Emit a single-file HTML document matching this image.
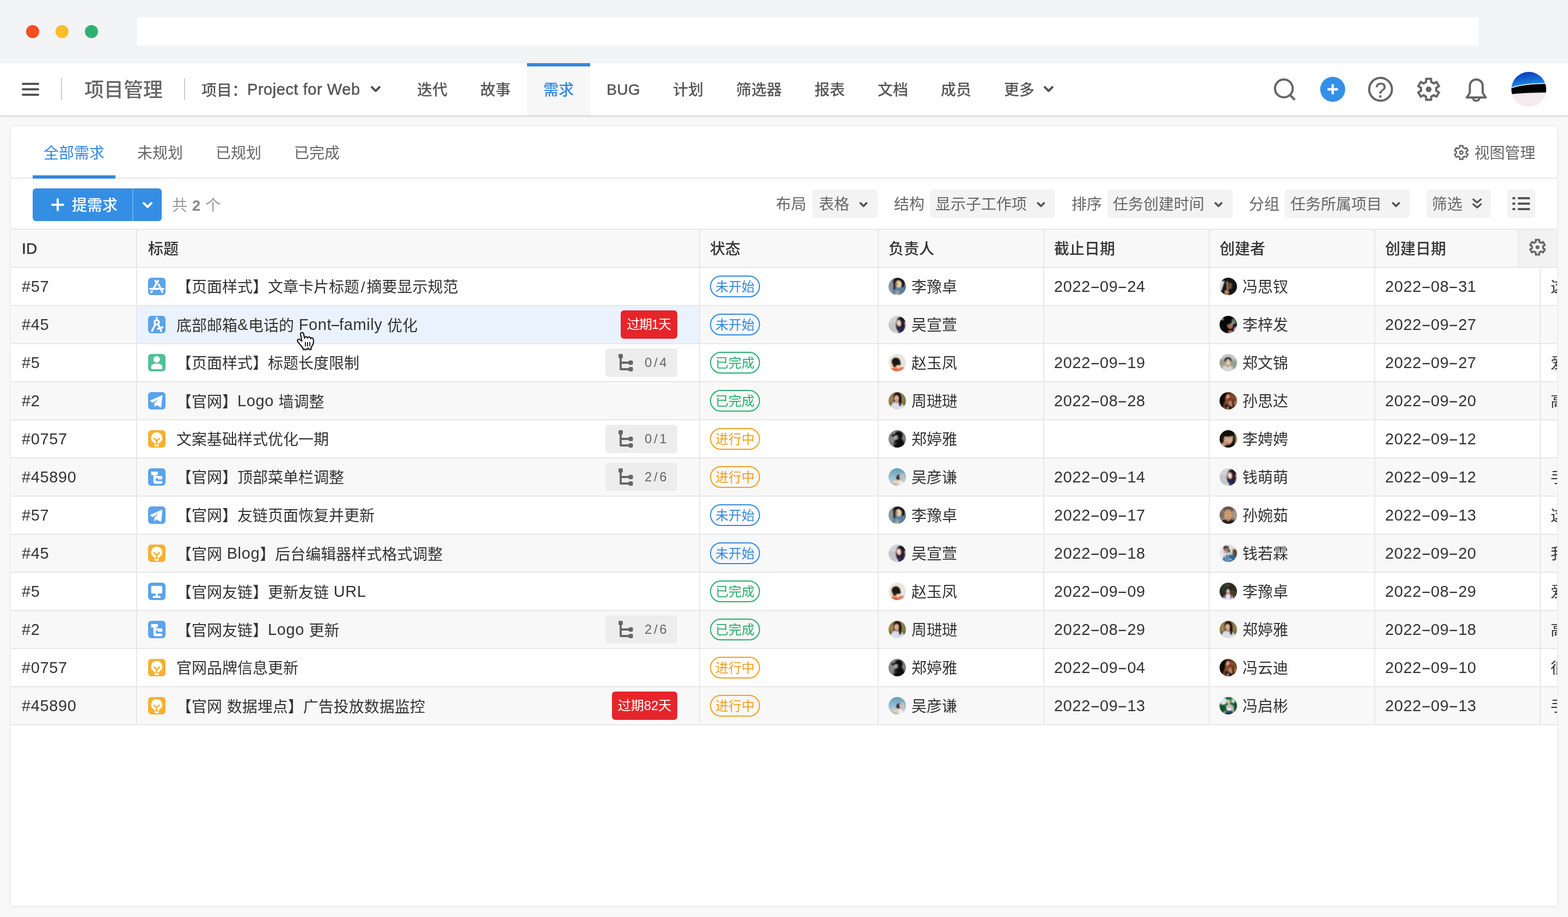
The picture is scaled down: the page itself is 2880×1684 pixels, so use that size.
<!DOCTYPE html>
<html lang="zh-CN">
<head>
<meta charset="utf-8">
<title>项目管理 - 需求</title>
<style>
*{box-sizing:border-box;margin:0;padding:0}
html,body{width:2880px;height:1684px;overflow:hidden}
body{position:relative;background:#f8f8f8;font-family:"Liberation Sans","Noto Sans CJK SC",sans-serif;font-size:28px;color:#333;-webkit-font-smoothing:antialiased}
i{font-style:normal}
svg{display:block}
.abs{position:absolute}
/* browser chrome */
.chrome{will-change:transform;position:absolute;left:0;top:0;width:2880px;height:116px;background:#f3f4f6}
.dot{position:absolute;top:46px;width:24px;height:24px;border-radius:50%}
.url{position:absolute;left:252px;top:32px;width:2464px;height:52px;background:#fff}
/* nav */
.nav{will-change:transform;position:absolute;left:0;top:116px;width:2880px;height:96px;background:#fff;box-shadow:0 1px 3px rgba(0,0,0,.2),0 2px 5px rgba(0,0,0,.05);z-index:5}
.nav .ham{position:absolute;left:40px;top:36px;width:32px;height:24px}
.nav .ham i{position:absolute;left:0;width:32px;height:4px;border-radius:2px;background:#555}
.nav .sep{position:absolute;top:28px;width:2px;height:40px;background:#ccc}
.nav .brand{position:absolute;left:155px;top:0;height:96px;line-height:99px;font-size:36px;font-weight:500;color:#666;white-space:nowrap}
.nav .proj{position:absolute;left:370px;top:0;height:96px;line-height:100px;font-size:28px;color:#555;white-space:nowrap;font-weight:500}
.nav .tab{position:absolute;top:0;height:96px;line-height:100px;font-size:28px;color:#555;text-align:center;white-space:nowrap;font-weight:500}
.nav .tab.on{background:#f7f7f7;color:#3388e0;border-top:6px solid #3388e0;line-height:88px}
.nav .ic{position:absolute}
/* card */
.card{will-change:transform;position:absolute;left:20px;top:232px;width:2840px;height:1432px;background:#fff;border-radius:5px;box-shadow:0 0 5px rgba(0,0,0,.09),0 1px 2px rgba(0,0,0,.06);overflow:hidden}
.vtabs{position:absolute;left:0;top:0;width:2840px;height:96px;border-bottom:2px solid #e8e8e8}
.vtab{position:absolute;top:0;height:96px;line-height:100px;font-size:28px;color:#666;white-space:nowrap}
.vtab.on{color:#3388e0}
.vtab.on:after{content:"";position:absolute;left:-20px;right:-20px;bottom:0;height:6px;background:#3388e0}
.vmgr{position:absolute;top:0;height:96px;line-height:99px;font-size:28px;color:#666;white-space:nowrap}
/* toolbar */
.btnp{position:absolute;left:40px;top:114px;width:237px;height:60px;border-radius:6px;background:#348fe4;color:#fff;font-size:28px;font-weight:500;line-height:64px;white-space:nowrap}
.btnp .sp{position:absolute;left:183px;top:0;width:2px;height:60px;background:rgba(255,255,255,.28)}
.cnt{position:absolute;left:296px;top:114px;height:60px;line-height:64px;letter-spacing:.5px;color:#999;font-size:28px;white-space:nowrap}
.cnt b{font-weight:700;color:#888}
.lab{position:absolute;top:116px;height:52px;line-height:56px;color:#666;font-size:28px;white-space:nowrap}
.sel{position:absolute;top:116px;height:52px;line-height:56px;background:#f3f3f3;border-radius:6px;color:#666;font-size:28px;white-space:nowrap;padding-left:10px}
.sel svg{position:absolute}
/* table */
.table{position:absolute;left:0;top:188px;width:2840px}
.tr{position:relative;height:70px;border-top:2px solid #e8e8e8;background:#fff;white-space:nowrap}
.tr.alt{background:#f8f8f8}
.tr.th{background:#f8f8f8;font-weight:500;color:#333}
.tr.end{height:2px;background:none}
.c{position:absolute;top:0;height:68px;line-height:72px;border-right:2px solid #e8e8e8;overflow:hidden}
.c-id{left:0;width:232px;padding-left:20px}
.c-title{left:232px;width:1034px;padding-left:20px}
.c-st{left:1266px;width:328px;padding-left:18px}
.c-own{left:1594px;width:304px;padding-left:18px}
.c-due{left:1898px;width:304px;padding-left:18px}
.c-cr{left:2202px;width:304px;padding-left:18px}
.c-cd{left:2506px;width:304px;padding-left:18px}
.c-ex{left:2810px;width:304px;padding-left:18px;border-right:0}
.c-gear{position:absolute;left:2768px;top:0;width:72px;height:68px;border-left:2px solid #e8e8e8;background:#f2f2f2}
.tr.hov .c-title{background:#eaf2fd}
.ti{position:absolute;left:20px;top:18px;width:32px;height:32px;border-radius:6px;background:#5ba3ea;overflow:hidden}
.ti-user{background:#4fc197}
.ti-bulb{background:#f4b133}
.tt{position:absolute;left:72px;top:0;height:68px;line-height:72px}
.bd{position:absolute;right:40px;top:8px;height:52px;line-height:52px;border-radius:6px;font-size:24px}
.bd.late{background:#e6252a;color:#fff;font-size:24px;line-height:51px;text-align:center}
.bd.l1{letter-spacing:-1.200px;text-indent:-1px}
.bd.sub{background:#ededed;color:#666;width:132px}
.bd.sub svg{position:absolute;left:23px;top:10px}
.bd.sub b{position:absolute;left:72px;top:0;font-weight:400;letter-spacing:3.6px}
.pill{position:absolute;left:18px;top:14px;width:92px;height:40px;border:2px solid;border-radius:20px;font-size:24px;line-height:37px;text-align:center}
.pill.todo{color:#3388e0;border-color:#3388e0}
.pill.done{color:#27ae6c;border-color:#27ae6c}
.pill.doing{color:#f0a020;border-color:#f0a020}
.av{position:absolute;left:18px;top:18px;width:32px;height:32px;border-radius:50%;overflow:hidden}
.nm{position:absolute;left:60px;top:0}
.num{letter-spacing:.6px;line-height:68px;font-size:29px}
.hy{display:inline-block;width:17px;text-align:center;letter-spacing:0;transform:scaleX(1.9)}
.hy2{display:inline-block;width:14px;text-align:center;letter-spacing:0;transform:scaleX(2)}
.sl{letter-spacing:0;padding:0 2.800px}
.cursor{position:absolute;left:545px;top:609px;z-index:9;filter:drop-shadow(0 1px 1.500px rgba(0,0,0,.35))}
.lt{letter-spacing:.6px;font-size:29px;position:relative;top:-2px}
.proj .lt{letter-spacing:.55px}
.nav .lt{-webkit-text-stroke:.5px #555}
.lb{-webkit-text-stroke:.5px;position:relative;top:-1px;letter-spacing:.3px}
.av svg{position:absolute;left:-4px;top:-4px;filter:blur(1px)}
.av svg.bl2{filter:blur(.8px)}
</style>
</head>
<body>
<div class="chrome">
<div class="dot" style="left:48px;background:#f44e22"></div>
<div class="dot" style="left:102px;background:#fdbc2c"></div>
<div class="dot" style="left:156px;background:#2fb171"></div>
<div class="url"></div>
</div>
<div class="nav">
<div class="ham"><i style="top:0"></i><i style="top:10px"></i><i style="top:20px"></i></div>
<div class="sep" style="left:112px"></div>
<div class="brand">项目管理</div>
<div class="sep" style="left:338px"></div>
<div class="proj">项目：<span class="lt">Project for Web</span></div>
<svg class="ic" style="left:680px;top:41px" width="20" height="14" viewBox="0 0 20 14"><path d="M3 3l7 7 7-7" fill="none" stroke="#555" stroke-width="4" stroke-linecap="round" stroke-linejoin="round"/></svg>
<div class="tab" style="left:736px;width:116px">迭代</div>
<div class="tab" style="left:852px;width:116px">故事</div>
<div class="tab on" style="left:968px;width:116px">需求</div>
<div class="tab" style="left:1084px;width:122px"><span class="lb">BUG</span></div>
<div class="tab" style="left:1206px;width:116px">计划</div>
<div class="tab" style="left:1322px;width:144px">筛选器</div>
<div class="tab" style="left:1466px;width:116px">报表</div>
<div class="tab" style="left:1582px;width:116px">文档</div>
<div class="tab" style="left:1698px;width:116px">成员</div>
<div class="tab" style="left:1814px;width:116px">更多</div>
<svg class="ic" style="left:1916px;top:41px" width="20" height="14" viewBox="0 0 20 14"><path d="M3 3l7 7 7-7" fill="none" stroke="#555" stroke-width="4" stroke-linecap="round" stroke-linejoin="round"/></svg>
<svg class="ic" style="left:2336px;top:24px" width="48" height="48" viewBox="0 0 48 48"><circle cx="22.100" cy="22.400" r="16.300" fill="none" stroke="#666" stroke-width="4"/><path d="M33.200 34.200L42.200 43.200" stroke="#666" stroke-width="4.400"/></svg><svg class="ic" style="left:2424px;top:24px" width="48" height="48" viewBox="0 0 48 48"><circle cx="23.800" cy="24" r="23" fill="#3390e8"/><path d="M14.300 24h19M23.800 14.800v18.400" stroke="#fff" stroke-width="4.400"/></svg><svg class="ic" style="left:2511px;top:24px" width="50" height="48" viewBox="0 0 50 48"><circle cx="24.700" cy="24" r="20.900" fill="none" stroke="#666" stroke-width="4"/><text x="24.800" y="38.700" font-size="38" text-anchor="middle" font-family="Liberation Sans,sans-serif" fill="#666" stroke="#666" stroke-width=".5">?</text></svg><svg class="ic" style="left:2599.500px;top:23.700px" width="48" height="48" viewBox="0 0 48 48"><path d="M28.86 10.66L28.45 4.71L19.55 4.71L19.14 10.66A14.20 14.20 0 0 0 14.87 13.12L9.52 10.50L5.07 18.21L10.02 21.53A14.20 14.20 0 0 0 10.02 26.47L5.07 29.79L9.52 37.50L14.87 34.88A14.20 14.20 0 0 0 19.14 37.34L19.55 43.29L28.45 43.29L28.86 37.34A14.20 14.20 0 0 0 33.13 34.88L38.48 37.50L42.93 29.79L37.98 26.47A14.20 14.20 0 0 0 37.98 21.53L42.93 18.21L38.48 10.50L33.13 13.12A14.20 14.20 0 0 0 28.86 10.66Z" fill="none" stroke="#666" stroke-width="4" stroke-linejoin="miter"/><circle cx="24" cy="24" r="5.300" fill="#666"/></svg><svg class="ic" style="left:2688px;top:24px" width="48" height="52" viewBox="0 0 48 52"><path d="M6 39h35c-2.800-4.200-5.700-7.400-5.700-10V17.500c0-6.500-5-11.500-11.800-11.500S11.700 11 11.700 17.500V29c0 2.600-2.900 5.800-5.700 10z" fill="none" stroke="#666" stroke-width="4" stroke-linejoin="round"/><path d="M17.500 40.500a6.200 6.200 0 0 0 12 0" fill="none" stroke="#666" stroke-width="3.600"/></svg><svg class="ic" style="left:2775.500px;top:15.700px" width="64" height="64" viewBox="0 0 64 64"><defs><clipPath id="avc"><circle cx="32" cy="32" r="32"/></clipPath><linearGradient id="avg" x1="0" y1="0" x2="0.300" y2="1"><stop offset="0" stop-color="#0a2fb4"/><stop offset="0.550" stop-color="#1565d0"/><stop offset="1" stop-color="#2a95ea"/></linearGradient><pattern id="avp" width="5" height="4" patternUnits="userSpaceOnUse"><path d="M0 0h5M0 0v4" stroke="#e9c8d6" stroke-width="0.500" fill="none"/></pattern></defs><g clip-path="url(#avc)"><rect width="64" height="64" fill="#f8eef0"/><rect y="36" width="64" height="28" fill="url(#avp)"/><path d="M0 0h64v22C40 22 16 25 0 30z" fill="url(#avg)"/><path d="M0 29.500C16 24.500 40 21.500 64 21.500v16.500C40 38 16 39 0 41z" fill="#000"/><path d="M0 29C16 24 40 21.200 64 21.200" fill="none" stroke="#fff" stroke-width="1.600"/></g></svg>
</div>
<div class="card">
<div class="vtabs">
<div class="vtab on" style="left:60px">全部需求</div>
<div class="vtab" style="left:232px">未规划</div>
<div class="vtab" style="left:376px">已规划</div>
<div class="vtab" style="left:520px">已完成</div>
<svg class="abs" style="left:2648px;top:32px" width="32" height="32" viewBox="0 0 32 32"><path d="M19.15 7.35L18.86 3.63L13.14 3.63L12.85 7.35A9.20 9.20 0 0 0 10.09 8.95L6.71 7.34L3.85 12.29L6.94 14.40A9.20 9.20 0 0 0 6.94 17.60L3.85 19.71L6.71 24.66L10.09 23.05A9.20 9.20 0 0 0 12.85 24.65L13.14 28.37L18.86 28.37L19.15 24.65A9.20 9.20 0 0 0 21.91 23.05L25.29 24.66L28.15 19.71L25.06 17.60A9.20 9.20 0 0 0 25.06 14.40L28.15 12.29L25.29 7.34L21.91 8.95A9.20 9.20 0 0 0 19.15 7.35Z" fill="none" stroke="#666" stroke-width="2.6" stroke-linejoin="miter"/><circle cx="16" cy="16" r="2.900" fill="none" stroke="#666" stroke-width="2.600"/></svg>
<div class="vmgr" style="left:2688px">视图管理</div>
</div>
<div class="btnp"><svg class="abs" style="left:34px;top:18px" width="24" height="24" viewBox="0 0 24 24"><path d="M12 2v20M2 12h20" stroke="#fff" stroke-width="4" stroke-linecap="round"/></svg><span class="abs" style="left:72px">提需求</span><span class="sp"></span><svg class="abs" style="left:201px;top:24px" width="20" height="14" viewBox="0 0 20 14"><path d="M3 3l7 7 7-7" fill="none" stroke="#fff" stroke-width="4" stroke-linecap="round" stroke-linejoin="round"/></svg></div>
<div class="cnt">共 <b>2</b> 个</div>
<div class="lab" style="left:1405px">布局</div>
<div class="sel" style="left:1472px;width:120px;padding-left:12px">表格<svg style="left:86px;top:22px" width="16" height="12" viewBox="0 0 16 12"><path d="M2.500 3l5.500 5.500L13.500 3" fill="none" stroke="#555" stroke-width="3.800" stroke-linecap="round" stroke-linejoin="round"/></svg></div>
<div class="lab" style="left:1622px">结构</div>
<div class="sel" style="left:1688px;width:230px">显示子工作项<svg style="left:196px;top:22px" width="16" height="12" viewBox="0 0 16 12"><path d="M2.500 3l5.500 5.500L13.500 3" fill="none" stroke="#555" stroke-width="3.800" stroke-linecap="round" stroke-linejoin="round"/></svg></div>
<div class="lab" style="left:1948px">排序</div>
<div class="sel" style="left:2014px;width:230px">任务创建时间<svg style="left:196px;top:22px" width="16" height="12" viewBox="0 0 16 12"><path d="M2.500 3l5.500 5.500L13.500 3" fill="none" stroke="#555" stroke-width="3.800" stroke-linecap="round" stroke-linejoin="round"/></svg></div>
<div class="lab" style="left:2274px">分组</div>
<div class="sel" style="left:2340px;width:230px">任务所属项目<svg style="left:196px;top:22px" width="16" height="12" viewBox="0 0 16 12"><path d="M2.500 3l5.500 5.500L13.500 3" fill="none" stroke="#555" stroke-width="3.800" stroke-linecap="round" stroke-linejoin="round"/></svg></div>
<div class="sel" style="left:2600px;width:118px">筛选<svg style="left:83px;top:15px" width="20" height="22" viewBox="0 0 20 22"><path d="M3 3l7 6 7-6M3 12l7 6 7-6" fill="none" stroke="#555" stroke-width="3.2" stroke-linecap="round" stroke-linejoin="round"/></svg></div>
<div class="sel" style="left:2748px;width:52px;padding:0"><svg style="left:10px;top:13px" width="32" height="26" viewBox="0 0 32 26"><path d="M0 1h5v4H0zM10 1h22v4H10zM0 11h5v4H0zM10 11h22v4H10zM0 21h5v4H0zM10 21h22v4H10z" fill="#555"/></svg></div>
<div class="table">
<div class="tr th"><div class="c c-id"><span class="lb">ID</span></div><div class="c c-title">标题</div><div class="c c-st">状态</div><div class="c c-own">负责人</div><div class="c c-due">截止日期</div><div class="c c-cr">创建者</div><div class="c c-cd">创建日期</div><div class="c-gear"><svg class="abs" style="left:16px;top:14px" width="36" height="36" viewBox="0 0 36 36"><path d="M21.49 8.42L21.15 4.36L14.85 4.36L14.51 8.42A10.20 10.20 0 0 0 11.44 10.19L7.76 8.45L4.61 13.91L7.95 16.23A10.20 10.20 0 0 0 7.95 19.77L4.61 22.09L7.76 27.55L11.44 25.81A10.20 10.20 0 0 0 14.51 27.58L14.85 31.64L21.15 31.64L21.49 27.58A10.20 10.20 0 0 0 24.56 25.81L28.24 27.55L31.39 22.09L28.05 19.77A10.20 10.20 0 0 0 28.05 16.23L31.39 13.91L28.24 8.45L24.56 10.19A10.20 10.20 0 0 0 21.49 8.42Z" fill="none" stroke="#666" stroke-width="3.4" stroke-linejoin="miter"/><circle cx="18" cy="18" r="3.600" fill="#666"/></svg></div></div>
<div class="tr"><div class="c c-id num">#57</div><div class="c c-title"><span class="ti ti-app"><svg width="32" height="32" viewBox="0 0 32 32"><g stroke="#fff" stroke-linecap="round" fill="none" stroke-width="3.500"><path d="M18.300 5.700L10 19.800M13.300 5.700L15 8.600M19.300 12.400L26.300 26.400M3.800 20.400H19.500M24.200 20.400H28.200M5.600 26.400L7.400 25.300"/></g></svg></span><span class="tt">【页面样式】文章卡片标题<i class="sl">/</i>摘要显示规范</span></div><div class="c c-st"><span class="pill todo">未开始</span></div><div class="c c-own"><span class="av"><svg class="bl" width="40" height="40" viewBox="-4 -4 40 40"><rect x="-4" y="-4" width="40" height="40" fill="#879899"/><rect x="25" y="-4" width="11" height="40" fill="#a9c7c3"/><path d="M8 18L34 13V36H9z" fill="#5f7e9e"/><path d="M13 22l8 3-3 9h-6z" fill="#7f9fb8"/><ellipse cx="19" cy="7" rx="11" ry="7.5" fill="#1b1020"/><rect x="9" y="4" width="3.5" height="17" fill="#2a1a28"/><ellipse cx="26" cy="11" rx="4" ry="6.5" fill="#22121e"/><ellipse cx="18.5" cy="11.5" rx="5.8" ry="6.8" fill="#e6d29e" transform="rotate(-15 18.5 11.5)"/><ellipse cx="14.5" cy="12" rx="2" ry="4" fill="#a8826a"/><ellipse cx="15" cy="31" rx="4" ry="2" fill="#e2c07e"/></svg></span><span class="nm">李豫卓</span></div><div class="c c-due num">2022<i class="hy">-</i>09<i class="hy">-</i>24</div><div class="c c-cr"><span class="av"><svg class="bl" width="40" height="40" viewBox="-4 -4 40 40"><rect x="-4" y="-4" width="40" height="40" fill="#161412"/><path d="M-2 6h11.500L3.500 24H-2z" fill="#dfe4e2"/><path d="M12.500 6l3.500 2-1 8 2 5-3 3-1-6z" fill="#b89880"/><ellipse cx="19.5" cy="15" rx="3.5" ry="6" fill="#7a5238"/><path d="M8 32l2-8 5-1 3 3-2 8z" fill="#a87848"/><ellipse cx="12" cy="25" rx="2.5" ry="2" fill="#d8b090"/></svg></span><span class="nm">冯思钗</span></div><div class="c c-cd num">2022<i class="hy">-</i>08<i class="hy">-</i>31</div><div class="c c-ex">这是迭代</div></div>
<div class="tr alt hov"><div class="c c-id num">#45</div><div class="c c-title"><span class="ti ti-comp"><svg width="32" height="32" viewBox="0 0 32 32"><g stroke="#fff" stroke-linecap="round" fill="none" stroke-width="3.500"><circle cx="15.800" cy="11.900" r="4"/><path d="M15.800 3.200V7M13 15.800L7.200 28M18.700 15.800L24.200 28M17.800 23.800L26.500 21"/></g></svg></span><span class="tt">底部邮箱<span class="lt">&amp;</span>电话的<span class="lt"> Font<i class="hy2">-</i>family </span>优化</span><span class="bd late l1" style="width:104px">过期1天</span></div><div class="c c-st"><span class="pill todo">未开始</span></div><div class="c c-own"><span class="av"><svg class="bl" width="40" height="40" viewBox="-4 -4 40 40"><rect x="-4" y="-4" width="40" height="40" fill="#c3c6cb"/><rect x="-4" y="-4" width="40" height="15" fill="#cfd3dd"/><rect x="-4" y="10" width="22" height="2" fill="#e0d2cc"/><path d="M12 28h10v8H10z" fill="#d9d2cc"/><ellipse cx="27" cy="6" rx="6" ry="6" fill="#1c2a22"/><ellipse cx="22" cy="16" rx="8.5" ry="14" fill="#2a1a1e"/><path d="M19 22l9-1 4 12H18z" fill="#1f2f80"/><ellipse cx="19" cy="13.5" rx="4.3" ry="6.2" fill="#ead3cb" transform="rotate(-8 19 13.5)"/><ellipse cx="18" cy="17.2" rx="1.3" ry="0.7" fill="#d86a6a"/><rect x="23" y="14" width="3" height="18" fill="#3a1c1c"/><ellipse cx="31" cy="14" rx="2" ry="3" fill="#c8c0d0"/></svg></span><span class="nm">吴宣萱</span></div><div class="c c-due num"></div><div class="c c-cr"><span class="av"><svg class="bl" width="40" height="40" viewBox="-4 -4 40 40"><rect x="-4" y="-4" width="40" height="40" fill="#060606"/><ellipse cx="27" cy="10" rx="5" ry="6" fill="#4a6a5c"/><ellipse cx="24.5" cy="12" rx="3" ry="2.5" fill="#8aa098"/><ellipse cx="5" cy="6" rx="3" ry="2" fill="#a890c0"/><path d="M25 24l6-6 3 4-6 10z" fill="#b898d4"/><ellipse cx="19.5" cy="17" rx="5.5" ry="7" fill="#b47c62"/><ellipse cx="17" cy="12" rx="6" ry="3.5" fill="#0a0a0a" transform="rotate(-25 17 12)"/><ellipse cx="19" cy="19.5" rx="2" ry="1" fill="#6a3c30"/><ellipse cx="20" cy="30" rx="5" ry="3.5" fill="#b87458"/></svg></span><span class="nm">李梓发</span></div><div class="c c-cd num">2022<i class="hy">-</i>09<i class="hy">-</i>27</div><div class="c c-ex"></div></div>
<div class="tr"><div class="c c-id num">#5</div><div class="c c-title"><span class="ti ti-user"><svg width="32" height="32" viewBox="0 0 32 32"><circle cx="15.800" cy="10" r="6.100" fill="#fff"/><path d="M5.700 26.500v-3.300c0-3.400 4.400-5.400 10.100-5.400s10.300 2 10.300 5.400v3.300a1.500 1.500 0 0 1-1.500 1.500H7.200a1.500 1.500 0 0 1-1.500-1.500z" fill="#fff"/></svg></span><span class="tt">【页面样式】标题长度限制</span><span class="bd sub"><svg width="28" height="32" viewBox="0 0 28 32"><path d="M5 4v24h16M5 16h16" fill="none" stroke="#666" stroke-width="3.800" stroke-linejoin="round"/><rect x="1" y="0" width="8" height="8" rx="2" fill="#666"/><rect x="19.500" y="12" width="8" height="8" rx="2" fill="#666"/><rect x="19.500" y="24" width="8" height="8" rx="2" fill="#666"/></svg><b>0/4</b></span></div><div class="c c-st"><span class="pill done">已完成</span></div><div class="c c-own"><span class="av"><svg class="bl2" width="40" height="40" viewBox="-4 -4 40 40"><rect x="-4" y="-4" width="40" height="40" fill="#ebe7dd"/><path d="M4 27c5-2 9-1 12-1 5-1 8-2 12-1l4 2v10H0z" fill="#e0643c"/><path d="M16 26c5-1 8-2 12-1l4 2v10H18z" fill="#e87a5e"/><rect x="12.5" y="21" width="3.5" height="6" fill="#d8903c"/><rect x="15" y="22" width="4" height="4.5" fill="#f0e0d0"/><ellipse cx="7.8" cy="20" rx="2" ry="4" fill="#dba25e"/><ellipse cx="13.5" cy="14" rx="8" ry="7.2" fill="#1a1714"/><ellipse cx="19" cy="17.5" rx="3.5" ry="3.2" fill="#1a1714"/><rect x="9" y="18" width="4" height="6" fill="#1a1714"/></svg></span><span class="nm">赵玉凤</span></div><div class="c c-due num">2022<i class="hy">-</i>09<i class="hy">-</i>19</div><div class="c c-cr"><span class="av"><svg class="bl" width="40" height="40" viewBox="-4 -4 40 40"><rect x="-4" y="-4" width="40" height="40" fill="#a9aba1"/><rect x="-4" y="-4" width="40" height="14" fill="#c6c9c3"/><rect x="20" y="14" width="16" height="22" fill="#92a097"/><rect x="-4" y="10" width="14" height="10" fill="#9a9c8e"/><path d="M3 36c0-8 3-13 8-15l4 3 5-2c5 2 7 7 8 14z" fill="#d9d7d5"/><ellipse cx="15.5" cy="11" rx="6.5" ry="5" fill="#1a2030"/><ellipse cx="16" cy="15" rx="4.2" ry="6" fill="#e2c2a2" transform="rotate(-10 16 15)"/><ellipse cx="15.5" cy="18" rx="1.5" ry="1" fill="#f0e8e0"/><rect x="13" y="20" width="4" height="4" fill="#c89870"/></svg></span><span class="nm">郑文锦</span></div><div class="c c-cd num">2022<i class="hy">-</i>09<i class="hy">-</i>27</div><div class="c c-ex">爱好者</div></div>
<div class="tr alt"><div class="c c-id num">#2</div><div class="c c-title"><span class="ti ti-send"><svg width="32" height="32" viewBox="0 0 32 32"><path d="M3.600 16L26.100 6 23.700 28.300 15.600 23.700 12.200 26.900 11.700 20.700 20.700 11.200 8.400 19.300z" fill="#fff" stroke="#fff" stroke-width=".6" stroke-linejoin="round"/></svg></span><span class="tt">【官网】<span class="lt">Logo </span>墙调整</span></div><div class="c c-st"><span class="pill done">已完成</span></div><div class="c c-own"><span class="av"><svg class="bl" width="40" height="40" viewBox="-4 -4 40 40"><rect x="-4" y="-4" width="40" height="40" fill="#9a8452"/><rect x="18" y="-4" width="18" height="30" fill="#8a7c4e"/><rect x="-4" y="19" width="40" height="8" fill="#6a7432"/><ellipse cx="16" cy="8" rx="7" ry="7.5" fill="#1e140e"/><rect x="19" y="8" width="4.5" height="18" fill="#120c0a"/><rect x="9.5" y="9" width="2.5" height="9" fill="#2a1a10"/><ellipse cx="14.8" cy="11.5" rx="4.4" ry="6" fill="#e2b4a0"/><ellipse cx="14.5" cy="14" rx="1.4" ry="0.8" fill="#c8402a"/><path d="M2 36c0-10 5-17 10-18l3 2 5-1c6 1 10 6 10 17z" fill="#dcdcea"/><rect x="19.5" y="17" width="3.5" height="8" fill="#120c0a"/></svg></span><span class="nm">周琎琎</span></div><div class="c c-due num">2022<i class="hy">-</i>08<i class="hy">-</i>28</div><div class="c c-cr"><span class="av"><svg class="bl" width="40" height="40" viewBox="-4 -4 40 40"><rect x="-4" y="-4" width="40" height="40" fill="#7c4c2a"/><rect x="-4" y="-4" width="14" height="34" fill="#0c0604"/><path d="M6 34c0-10 3-16 6-20l4 4-2 16z" fill="#8a5030"/><ellipse cx="14" cy="5" rx="6" ry="4" fill="#1a0c08"/><ellipse cx="15.5" cy="8.5" rx="3.6" ry="5" fill="#d49c84"/><ellipse cx="18" cy="12.5" rx="2.2" ry="2.6" fill="#a01224"/><path d="M17 16l5 1 1 10-5 2z" fill="#c48c7c"/><path d="M10 22l6 2 6 3v9H10z" fill="#0a0a08"/><path d="M11.500 24.500l6 1-1 2z" fill="#3c6c32"/><ellipse cx="15" cy="29.5" rx="3" ry="2.5" fill="#b88070"/><rect x="23" y="14" width="5" height="18" fill="#5a3018"/><rect x="27" y="16" width="4" height="8" fill="#a87060"/></svg></span><span class="nm">孙思达</span></div><div class="c c-cd num">2022<i class="hy">-</i>09<i class="hy">-</i>20</div><div class="c c-ex">高优先</div></div>
<div class="tr"><div class="c c-id num">#0757</div><div class="c c-title"><span class="ti ti-bulb"><svg width="32" height="32" viewBox="0 0 32 32"><path d="M15.800 4.100a10.100 10.100 0 0 0-5.600 18.500c.9.700 1.400 1.400 1.500 2.100h8.300c.1-.7.600-1.400 1.500-2.100A10.100 10.100 0 0 0 15.800 4.100z" fill="#fff"/><path d="M11 15.300l4.800 4.400 4.800-4.400M15.800 19.700v5.200" fill="none" stroke="#f4b133" stroke-width="2.900" stroke-linecap="round"/><path d="M11.700 26.400h8.300a4.150 3.700 0 0 1-8.300 0z" fill="#fff"/></svg></span><span class="tt">文案基础样式优化一期</span><span class="bd sub"><svg width="28" height="32" viewBox="0 0 28 32"><path d="M5 4v24h16M5 16h16" fill="none" stroke="#666" stroke-width="3.800" stroke-linejoin="round"/><rect x="1" y="0" width="8" height="8" rx="2" fill="#666"/><rect x="19.500" y="12" width="8" height="8" rx="2" fill="#666"/><rect x="19.500" y="24" width="8" height="8" rx="2" fill="#666"/></svg><b>0/1</b></span></div><div class="c c-st"><span class="pill doing">进行中</span></div><div class="c c-own"><span class="av"><svg class="bl" width="40" height="40" viewBox="-4 -4 40 40"><rect x="-4" y="-4" width="40" height="40" fill="#808080"/><ellipse cx="10" cy="14" rx="9" ry="10" fill="#8c8c8c"/><path d="M10 36V22l4-6h10c3 2 5 6 5 10v10z" fill="#0e0e0e"/><path d="M11 10c0-5 4-8 8-8s7 3 7 8l-3 8h-6v-6z" fill="#0d0d0d"/><path d="M5 8.500l9-1.500v4l-8 .5z" fill="#0d0d0d"/><ellipse cx="14" cy="13.5" rx="3.8" ry="4.2" fill="#a8a8a8"/><ellipse cx="17" cy="14.5" rx="1.5" ry="2.5" fill="#5a5a5a"/><ellipse cx="13" cy="24" rx="1" ry="2" fill="#8a8a8a"/></svg></span><span class="nm">郑婷雅</span></div><div class="c c-due num"></div><div class="c c-cr"><span class="av"><svg class="bl" width="40" height="40" viewBox="-4 -4 40 40"><rect x="-4" y="-4" width="40" height="40" fill="#0e0c08"/><path d="M25 2c4 6 5 18 1 28l8 2V0z" fill="#7c8c52"/><ellipse cx="16" cy="17" rx="8.5" ry="10" fill="#d8aa92" transform="rotate(18 16 17)"/><ellipse cx="15" cy="6" rx="12" ry="6" fill="#100c08"/><ellipse cx="4" cy="16" rx="3.5" ry="8" fill="#1a140c"/><ellipse cx="8" cy="26" rx="5.5" ry="4" fill="#c49478" transform="rotate(-20 8 26)"/><ellipse cx="14.5" cy="23.3" rx="2.2" ry="1" fill="#b23232" transform="rotate(15 14.5 23.3)"/><ellipse cx="17.5" cy="14.5" rx="1.4" ry="0.6" fill="#3a3030"/><ellipse cx="10.5" cy="16.5" rx="1.3" ry="0.6" fill="#3a3030"/><path d="M8 30l8-2 8 1 2 7H8z" fill="#0a0a08"/><ellipse cx="24" cy="13" rx="1.5" ry="3" fill="#a87858"/></svg></span><span class="nm">李娉娉</span></div><div class="c c-cd num">2022<i class="hy">-</i>09<i class="hy">-</i>12</div><div class="c c-ex"></div></div>
<div class="tr alt"><div class="c c-id num">#45890</div><div class="c c-title"><span class="ti ti-tree"><svg width="32" height="32" viewBox="0 0 32 32"><path d="M5.700 6h12.200v6.200h-3.800v1.800h12v6.200h-8v-2.100h-4v5.500h12v4.700H13.800a4 4 0 0 1-4-4V12.200H5.700z" fill="#fff"/></svg></span><span class="tt">【官网】顶部菜单栏调整</span><span class="bd sub"><svg width="28" height="32" viewBox="0 0 28 32"><path d="M5 4v24h16M5 16h16" fill="none" stroke="#666" stroke-width="3.800" stroke-linejoin="round"/><rect x="1" y="0" width="8" height="8" rx="2" fill="#666"/><rect x="19.500" y="12" width="8" height="8" rx="2" fill="#666"/><rect x="19.500" y="24" width="8" height="8" rx="2" fill="#666"/></svg><b>2/6</b></span></div><div class="c c-st"><span class="pill doing">进行中</span></div><div class="c c-own"><span class="av"><svg class="bl" width="40" height="40" viewBox="-4 -4 40 40"><defs><linearGradient id="sky" x1="0" y1="0" x2="0" y2="1"><stop offset="0" stop-color="#5596b5"/><stop offset=".8" stop-color="#bcd6e2"/></linearGradient></defs><rect x="-4" y="-4" width="40" height="40" fill="url(#sky)"/><path d="M3 26l10 2 8 8H0z" fill="#bfb39b"/><path d="M7 25c5-3 10-5 14-5l4 4-3 5-12-1z" fill="#ecd0bc"/><path d="M19 23l8 1-1 10h-7z" fill="#f2ece8"/><ellipse cx="18" cy="16.5" rx="3.5" ry="4.8" fill="#2a2028" transform="rotate(15 18 16.5)"/><ellipse cx="21.5" cy="15.5" rx="2.2" ry="2.8" fill="#e8c4ae"/><path d="M24 21c2-3 3-7 1.500-10l2.500-.5c2.500 3 2 8-1 12z" fill="#e6c0a6"/><ellipse cx="24" cy="11" rx="2" ry="1.3" fill="#e8b8a0"/></svg></span><span class="nm">吴彦谦</span></div><div class="c c-due num">2022<i class="hy">-</i>09<i class="hy">-</i>14</div><div class="c c-cr"><span class="av"><svg class="bl" width="40" height="40" viewBox="-4 -4 40 40"><rect x="-4" y="-4" width="40" height="40" fill="#c3c6cb"/><rect x="-4" y="-4" width="40" height="15" fill="#cfd3dd"/><rect x="-4" y="10" width="22" height="2" fill="#e0d2cc"/><path d="M12 28h10v8H10z" fill="#d9d2cc"/><ellipse cx="27" cy="6" rx="6" ry="6" fill="#1c2a22"/><ellipse cx="22" cy="16" rx="8.5" ry="14" fill="#2a1a1e"/><path d="M19 22l9-1 4 12H18z" fill="#1f2f80"/><ellipse cx="19" cy="13.5" rx="4.3" ry="6.2" fill="#ead3cb" transform="rotate(-8 19 13.5)"/><ellipse cx="18" cy="17.2" rx="1.3" ry="0.7" fill="#d86a6a"/><rect x="23" y="14" width="3" height="18" fill="#3a1c1c"/><ellipse cx="31" cy="14" rx="2" ry="3" fill="#c8c0d0"/></svg></span><span class="nm">钱萌萌</span></div><div class="c c-cd num">2022<i class="hy">-</i>09<i class="hy">-</i>12</div><div class="c c-ex">手机端</div></div>
<div class="tr"><div class="c c-id num">#57</div><div class="c c-title"><span class="ti ti-send"><svg width="32" height="32" viewBox="0 0 32 32"><path d="M3.600 16L26.100 6 23.700 28.300 15.600 23.700 12.200 26.900 11.700 20.700 20.700 11.200 8.400 19.300z" fill="#fff" stroke="#fff" stroke-width=".6" stroke-linejoin="round"/></svg></span><span class="tt">【官网】友链页面恢复并更新</span></div><div class="c c-st"><span class="pill todo">未开始</span></div><div class="c c-own"><span class="av"><svg class="bl" width="40" height="40" viewBox="-4 -4 40 40"><rect x="-4" y="-4" width="40" height="40" fill="#879899"/><rect x="25" y="-4" width="11" height="40" fill="#a9c7c3"/><path d="M8 18L34 13V36H9z" fill="#5f7e9e"/><path d="M13 22l8 3-3 9h-6z" fill="#7f9fb8"/><ellipse cx="19" cy="7" rx="11" ry="7.5" fill="#1b1020"/><rect x="9" y="4" width="3.5" height="17" fill="#2a1a28"/><ellipse cx="26" cy="11" rx="4" ry="6.5" fill="#22121e"/><ellipse cx="18.5" cy="11.5" rx="5.8" ry="6.8" fill="#e6d29e" transform="rotate(-15 18.5 11.5)"/><ellipse cx="14.5" cy="12" rx="2" ry="4" fill="#a8826a"/><ellipse cx="15" cy="31" rx="4" ry="2" fill="#e2c07e"/></svg></span><span class="nm">李豫卓</span></div><div class="c c-due num">2022<i class="hy">-</i>09<i class="hy">-</i>17</div><div class="c c-cr"><span class="av"><svg class="bl" width="40" height="40" viewBox="-4 -4 40 40"><rect x="-4" y="-4" width="40" height="40" fill="#8c7c72"/><rect x="24" y="8" width="8" height="14" fill="#a8988c"/><rect x="0" y="10" width="8" height="10" fill="#7a6e66"/><ellipse cx="16" cy="6" rx="8.5" ry="6" fill="#5a504c"/><ellipse cx="15.8" cy="15" rx="7" ry="9.5" fill="#dca474"/><ellipse cx="15.8" cy="8" rx="6" ry="2.5" fill="#c89068"/><ellipse cx="12.8" cy="13.5" rx="1.5" ry="0.7" fill="#5a4030"/><ellipse cx="18.8" cy="13.5" rx="1.5" ry="0.7" fill="#5a4030"/><ellipse cx="15.8" cy="19" rx="2" ry="0.8" fill="#8a5438"/><ellipse cx="15.8" cy="22" rx="2.5" ry="0.8" fill="#b87858"/><path d="M2 36c0-7 3-11 8-12l6 4 6-4c5 1 8 5 8 12z" fill="#2a1814"/><ellipse cx="9" cy="22.5" rx="1.5" ry="1" fill="#e0d8e0"/></svg></span><span class="nm">孙婉茹</span></div><div class="c c-cd num">2022<i class="hy">-</i>09<i class="hy">-</i>13</div><div class="c c-ex">这是迭代</div></div>
<div class="tr alt"><div class="c c-id num">#45</div><div class="c c-title"><span class="ti ti-bulb"><svg width="32" height="32" viewBox="0 0 32 32"><path d="M15.800 4.100a10.100 10.100 0 0 0-5.600 18.500c.9.700 1.400 1.400 1.500 2.100h8.300c.1-.7.600-1.400 1.500-2.100A10.100 10.100 0 0 0 15.800 4.100z" fill="#fff"/><path d="M11 15.300l4.800 4.400 4.800-4.400M15.800 19.700v5.200" fill="none" stroke="#f4b133" stroke-width="2.900" stroke-linecap="round"/><path d="M11.700 26.400h8.300a4.150 3.700 0 0 1-8.300 0z" fill="#fff"/></svg></span><span class="tt">【官网<span class="lt"> Blog</span>】后台编辑器样式格式调整</span></div><div class="c c-st"><span class="pill todo">未开始</span></div><div class="c c-own"><span class="av"><svg class="bl" width="40" height="40" viewBox="-4 -4 40 40"><rect x="-4" y="-4" width="40" height="40" fill="#c3c6cb"/><rect x="-4" y="-4" width="40" height="15" fill="#cfd3dd"/><rect x="-4" y="10" width="22" height="2" fill="#e0d2cc"/><path d="M12 28h10v8H10z" fill="#d9d2cc"/><ellipse cx="27" cy="6" rx="6" ry="6" fill="#1c2a22"/><ellipse cx="22" cy="16" rx="8.5" ry="14" fill="#2a1a1e"/><path d="M19 22l9-1 4 12H18z" fill="#1f2f80"/><ellipse cx="19" cy="13.5" rx="4.3" ry="6.2" fill="#ead3cb" transform="rotate(-8 19 13.5)"/><ellipse cx="18" cy="17.2" rx="1.3" ry="0.7" fill="#d86a6a"/><rect x="23" y="14" width="3" height="18" fill="#3a1c1c"/><ellipse cx="31" cy="14" rx="2" ry="3" fill="#c8c0d0"/></svg></span><span class="nm">吴宣萱</span></div><div class="c c-due num">2022<i class="hy">-</i>09<i class="hy">-</i>18</div><div class="c c-cr"><span class="av"><svg class="bl" width="40" height="40" viewBox="-4 -4 40 40"><rect x="-4" y="-4" width="40" height="40" fill="#dedede"/><rect x="-4" y="-4" width="10" height="40" fill="#e8e8e8"/><rect x="24" y="8" width="12" height="16" fill="#5c4c44"/><rect x="24" y="8" width="8" height="2" fill="#a87850"/><rect x="19" y="14" width="5" height="8" fill="#c8c8c8"/><path d="M5 36c0-9 3-15 7-17h9c5 1 9 5 11 10v7z" fill="#286a9a"/><path d="M10 18l6-1 1 19h-6z" fill="#d2e2f2"/><rect x="12.5" y="19" width="2" height="17" fill="#1a1a20"/><ellipse cx="12" cy="6.5" rx="5" ry="4" fill="#121214"/><ellipse cx="12.5" cy="11" rx="4.2" ry="5.5" fill="#ca9a82"/><rect x="8.5" y="8.5" width="8" height="2" fill="#5a4848"/><ellipse cx="17.5" cy="12" rx="1.5" ry="3" fill="#2a2024"/><rect x="18.5" y="26" width="3.5" height="2.5" fill="#e8eef4"/></svg></span><span class="nm">钱若霖</span></div><div class="c c-cd num">2022<i class="hy">-</i>09<i class="hy">-</i>20</div><div class="c c-ex">我的项目</div></div>
<div class="tr"><div class="c c-id num">#5</div><div class="c c-title"><span class="ti ti-desk"><svg width="32" height="32" viewBox="0 0 32 32"><rect x="5.700" y="5.900" width="20.400" height="14.100" rx="2.200" fill="#fff"/><path d="M13.800 19.500h4.100v4.700h4l1.400 3.800H8.300l1.400-3.800h4.100z" fill="#fff"/></svg></span><span class="tt">【官网友链】更新友链<span class="lt"> URL</span></span></div><div class="c c-st"><span class="pill done">已完成</span></div><div class="c c-own"><span class="av"><svg class="bl2" width="40" height="40" viewBox="-4 -4 40 40"><rect x="-4" y="-4" width="40" height="40" fill="#ebe7dd"/><path d="M4 27c5-2 9-1 12-1 5-1 8-2 12-1l4 2v10H0z" fill="#e0643c"/><path d="M16 26c5-1 8-2 12-1l4 2v10H18z" fill="#e87a5e"/><rect x="12.5" y="21" width="3.5" height="6" fill="#d8903c"/><rect x="15" y="22" width="4" height="4.5" fill="#f0e0d0"/><ellipse cx="7.8" cy="20" rx="2" ry="4" fill="#dba25e"/><ellipse cx="13.5" cy="14" rx="8" ry="7.2" fill="#1a1714"/><ellipse cx="19" cy="17.5" rx="3.5" ry="3.2" fill="#1a1714"/><rect x="9" y="18" width="4" height="6" fill="#1a1714"/></svg></span><span class="nm">赵玉凤</span></div><div class="c c-due num">2022<i class="hy">-</i>09<i class="hy">-</i>09</div><div class="c c-cr"><span class="av"><svg class="bl" width="40" height="40" viewBox="-4 -4 40 40"><rect x="-4" y="-4" width="40" height="40" fill="#2c2a20"/><ellipse cx="8" cy="10" rx="8" ry="8" fill="#26382a"/><ellipse cx="24" cy="22" rx="8" ry="8" fill="#4a3c2c"/><ellipse cx="14" cy="4" rx="5" ry="4" fill="#4a3a2c"/><path d="M5 36c0-8 3-13 8-15h6c5 2 7 7 8 15z" fill="#dac2ca"/><path d="M12 21h7v15h-7z" fill="#e8e8f2"/><rect x="9" y="21.5" width="2" height="6.5" fill="#3a4a8c"/><rect x="20" y="21.5" width="2" height="6.5" fill="#3a4a8c"/><ellipse cx="15.5" cy="13" rx="3.8" ry="3.5" fill="#1a1414"/><ellipse cx="15.5" cy="16" rx="3" ry="4.5" fill="#ecccbc"/><ellipse cx="15.5" cy="18.3" rx="1" ry="0.8" fill="#b03838"/><rect x="13.5" y="19.5" width="4" height="2.5" fill="#c89878"/></svg></span><span class="nm">李豫卓</span></div><div class="c c-cd num">2022<i class="hy">-</i>08<i class="hy">-</i>29</div><div class="c c-ex">爱好者</div></div>
<div class="tr alt"><div class="c c-id num">#2</div><div class="c c-title"><span class="ti ti-tree"><svg width="32" height="32" viewBox="0 0 32 32"><path d="M5.700 6h12.200v6.200h-3.800v1.800h12v6.200h-8v-2.100h-4v5.500h12v4.700H13.800a4 4 0 0 1-4-4V12.200H5.700z" fill="#fff"/></svg></span><span class="tt">【官网友链】<span class="lt">Logo </span>更新</span><span class="bd sub"><svg width="28" height="32" viewBox="0 0 28 32"><path d="M5 4v24h16M5 16h16" fill="none" stroke="#666" stroke-width="3.800" stroke-linejoin="round"/><rect x="1" y="0" width="8" height="8" rx="2" fill="#666"/><rect x="19.500" y="12" width="8" height="8" rx="2" fill="#666"/><rect x="19.500" y="24" width="8" height="8" rx="2" fill="#666"/></svg><b>2/6</b></span></div><div class="c c-st"><span class="pill done">已完成</span></div><div class="c c-own"><span class="av"><svg class="bl" width="40" height="40" viewBox="-4 -4 40 40"><rect x="-4" y="-4" width="40" height="40" fill="#9a8452"/><rect x="18" y="-4" width="18" height="30" fill="#8a7c4e"/><rect x="-4" y="19" width="40" height="8" fill="#6a7432"/><ellipse cx="16" cy="8" rx="7" ry="7.5" fill="#1e140e"/><rect x="19" y="8" width="4.5" height="18" fill="#120c0a"/><rect x="9.5" y="9" width="2.5" height="9" fill="#2a1a10"/><ellipse cx="14.8" cy="11.5" rx="4.4" ry="6" fill="#e2b4a0"/><ellipse cx="14.5" cy="14" rx="1.4" ry="0.8" fill="#c8402a"/><path d="M2 36c0-10 5-17 10-18l3 2 5-1c6 1 10 6 10 17z" fill="#dcdcea"/><rect x="19.5" y="17" width="3.5" height="8" fill="#120c0a"/></svg></span><span class="nm">周琎琎</span></div><div class="c c-due num">2022<i class="hy">-</i>08<i class="hy">-</i>29</div><div class="c c-cr"><span class="av"><svg class="bl" width="40" height="40" viewBox="-4 -4 40 40"><rect x="-4" y="-4" width="40" height="40" fill="#9a8452"/><rect x="18" y="-4" width="18" height="30" fill="#8a7c4e"/><rect x="-4" y="19" width="40" height="8" fill="#6a7432"/><ellipse cx="16" cy="8" rx="7" ry="7.5" fill="#1e140e"/><rect x="19" y="8" width="4.5" height="18" fill="#120c0a"/><rect x="9.5" y="9" width="2.5" height="9" fill="#2a1a10"/><ellipse cx="14.8" cy="11.5" rx="4.4" ry="6" fill="#e2b4a0"/><ellipse cx="14.5" cy="14" rx="1.4" ry="0.8" fill="#c8402a"/><path d="M2 36c0-10 5-17 10-18l3 2 5-1c6 1 10 6 10 17z" fill="#dcdcea"/><rect x="19.5" y="17" width="3.5" height="8" fill="#120c0a"/></svg></span><span class="nm">郑婷雅</span></div><div class="c c-cd num">2022<i class="hy">-</i>09<i class="hy">-</i>18</div><div class="c c-ex">高优先</div></div>
<div class="tr"><div class="c c-id num">#0757</div><div class="c c-title"><span class="ti ti-bulb"><svg width="32" height="32" viewBox="0 0 32 32"><path d="M15.800 4.100a10.100 10.100 0 0 0-5.600 18.500c.9.700 1.400 1.400 1.500 2.100h8.300c.1-.7.600-1.400 1.500-2.100A10.100 10.100 0 0 0 15.800 4.100z" fill="#fff"/><path d="M11 15.300l4.800 4.400 4.800-4.400M15.800 19.700v5.200" fill="none" stroke="#f4b133" stroke-width="2.900" stroke-linecap="round"/><path d="M11.700 26.400h8.300a4.150 3.700 0 0 1-8.300 0z" fill="#fff"/></svg></span><span class="tt">官网品牌信息更新</span></div><div class="c c-st"><span class="pill doing">进行中</span></div><div class="c c-own"><span class="av"><svg class="bl" width="40" height="40" viewBox="-4 -4 40 40"><rect x="-4" y="-4" width="40" height="40" fill="#808080"/><ellipse cx="10" cy="14" rx="9" ry="10" fill="#8c8c8c"/><path d="M10 36V22l4-6h10c3 2 5 6 5 10v10z" fill="#0e0e0e"/><path d="M11 10c0-5 4-8 8-8s7 3 7 8l-3 8h-6v-6z" fill="#0d0d0d"/><path d="M5 8.500l9-1.500v4l-8 .5z" fill="#0d0d0d"/><ellipse cx="14" cy="13.5" rx="3.8" ry="4.2" fill="#a8a8a8"/><ellipse cx="17" cy="14.5" rx="1.5" ry="2.5" fill="#5a5a5a"/><ellipse cx="13" cy="24" rx="1" ry="2" fill="#8a8a8a"/></svg></span><span class="nm">郑婷雅</span></div><div class="c c-due num">2022<i class="hy">-</i>09<i class="hy">-</i>04</div><div class="c c-cr"><span class="av"><svg class="bl" width="40" height="40" viewBox="-4 -4 40 40"><rect x="-4" y="-4" width="40" height="40" fill="#7c4c2a"/><rect x="-4" y="-4" width="14" height="34" fill="#0c0604"/><path d="M6 34c0-10 3-16 6-20l4 4-2 16z" fill="#8a5030"/><ellipse cx="14" cy="5" rx="6" ry="4" fill="#1a0c08"/><ellipse cx="15.5" cy="8.5" rx="3.6" ry="5" fill="#d49c84"/><ellipse cx="18" cy="12.5" rx="2.2" ry="2.6" fill="#a01224"/><path d="M17 16l5 1 1 10-5 2z" fill="#c48c7c"/><path d="M10 22l6 2 6 3v9H10z" fill="#0a0a08"/><path d="M11.500 24.500l6 1-1 2z" fill="#3c6c32"/><ellipse cx="15" cy="29.5" rx="3" ry="2.5" fill="#b88070"/><rect x="23" y="14" width="5" height="18" fill="#5a3018"/><rect x="27" y="16" width="4" height="8" fill="#a87060"/></svg></span><span class="nm">冯云迪</span></div><div class="c c-cd num">2022<i class="hy">-</i>09<i class="hy">-</i>10</div><div class="c c-ex">很重要</div></div>
<div class="tr alt"><div class="c c-id num">#45890</div><div class="c c-title"><span class="ti ti-bulb"><svg width="32" height="32" viewBox="0 0 32 32"><path d="M15.800 4.100a10.100 10.100 0 0 0-5.600 18.500c.9.700 1.400 1.400 1.500 2.100h8.300c.1-.7.600-1.400 1.500-2.100A10.100 10.100 0 0 0 15.800 4.100z" fill="#fff"/><path d="M11 15.300l4.800 4.400 4.800-4.400M15.800 19.700v5.200" fill="none" stroke="#f4b133" stroke-width="2.900" stroke-linecap="round"/><path d="M11.700 26.400h8.300a4.150 3.700 0 0 1-8.300 0z" fill="#fff"/></svg></span><span class="tt">【官网<span class="lt"> </span>数据埋点】广告投放数据监控</span><span class="bd late" style="width:120px">过期82天</span></div><div class="c c-st"><span class="pill doing">进行中</span></div><div class="c c-own"><span class="av"><svg class="bl" width="40" height="40" viewBox="-4 -4 40 40"><defs><linearGradient id="sky" x1="0" y1="0" x2="0" y2="1"><stop offset="0" stop-color="#5596b5"/><stop offset=".8" stop-color="#bcd6e2"/></linearGradient></defs><rect x="-4" y="-4" width="40" height="40" fill="url(#sky)"/><path d="M3 26l10 2 8 8H0z" fill="#bfb39b"/><path d="M7 25c5-3 10-5 14-5l4 4-3 5-12-1z" fill="#ecd0bc"/><path d="M19 23l8 1-1 10h-7z" fill="#f2ece8"/><ellipse cx="18" cy="16.5" rx="3.5" ry="4.8" fill="#2a2028" transform="rotate(15 18 16.5)"/><ellipse cx="21.5" cy="15.5" rx="2.2" ry="2.8" fill="#e8c4ae"/><path d="M24 21c2-3 3-7 1.500-10l2.500-.5c2.500 3 2 8-1 12z" fill="#e6c0a6"/><ellipse cx="24" cy="11" rx="2" ry="1.3" fill="#e8b8a0"/></svg></span><span class="nm">吴彦谦</span></div><div class="c c-due num">2022<i class="hy">-</i>09<i class="hy">-</i>13</div><div class="c c-cr"><span class="av"><svg class="bl" width="40" height="40" viewBox="-4 -4 40 40"><rect x="-4" y="-4" width="40" height="40" fill="#1c6a3c"/><ellipse cx="7" cy="8" rx="7" ry="6" fill="#dfe8e6" transform="rotate(-35 7 8)"/><ellipse cx="25" cy="7" rx="3.5" ry="4" fill="#c8dcd4"/><ellipse cx="4" cy="22" rx="6" ry="8" fill="#145030"/><ellipse cx="29" cy="20" rx="5" ry="9" fill="#18503a"/><path d="M12.500 16l4-1.500h6l3 2-1 9h-11z" fill="#eeeceA"/><rect x="15" y="17" width="6" height="2.2" fill="#ea6c5c"/><rect x="22" y="15" width="1.3" height="11" fill="#6a7a8a"/><path d="M10 36l2-10.500h10l1 10.500z" fill="#1a3c5c"/><ellipse cx="17" cy="9.5" rx="3" ry="3.6" fill="#ecc4ac"/><ellipse cx="18" cy="9" rx="1.5" ry="1.1" fill="#e8703a"/><ellipse cx="16.5" cy="6.5" rx="3" ry="1.5" fill="#e8e0dc"/><rect x="16" y="12" width="2.5" height="3" fill="#e4b8a0"/><path d="M24 18l2 1 1 12-2 1z" fill="#e8c0a8"/><path d="M7 27l5-1v2l-5 2z" fill="#e0b8a0"/></svg></span><span class="nm">冯启彬</span></div><div class="c c-cd num">2022<i class="hy">-</i>09<i class="hy">-</i>13</div><div class="c c-ex">手机端</div></div>
<div class="tr end"></div>
</div>
</div>
<svg class="cursor" width="32" height="34" viewBox="0 0 32 34"><path d="M9.600 17.600L7.100 5C6.500 1.200 11.600 0.200 12.700 4L14.300 12.600C14.600 8.600 19.300 8.300 20 12.200C20.600 8.800 25 9 25.600 13C26.400 10.500 30.300 11.200 30.500 14.500C30.800 17 30.800 19.500 30.200 22C29.600 24.500 27 27 26.400 29.500V32.500H22.800L21 30L19.300 32.500H11.600V30.300C9 26.500 4 21.500 1.900 17.800C0.500 15.200 3 12.600 5.600 14.600z" fill="#fff" stroke="#000" stroke-width="1.800" stroke-linejoin="round"/><path d="M15.900 19v8M19.900 19v8M24 19v8" stroke="#000" stroke-width="1.700"/></svg>
</body>
</html>
